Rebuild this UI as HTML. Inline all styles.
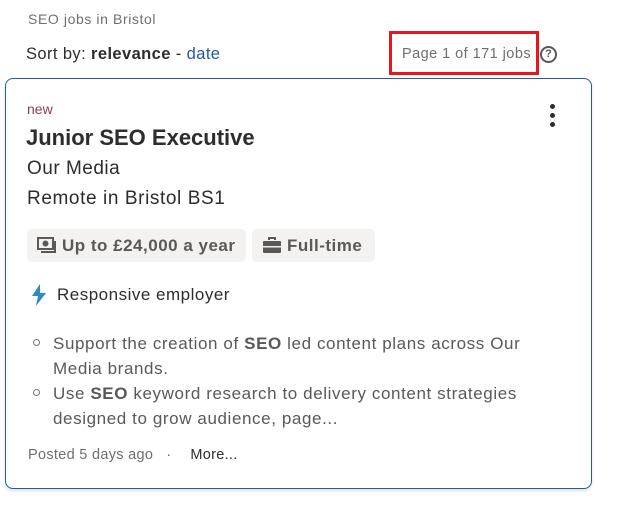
<!DOCTYPE html>
<html><head><meta charset="utf-8"><style>
body{margin:0;width:631px;height:516px;background:#fff;font-family:"Liberation Sans",sans-serif;position:relative;overflow:hidden;color:#2d2d2d}
.a{position:absolute;white-space:nowrap}
.card{position:absolute;left:5px;top:78px;width:585px;height:409px;border:1px solid #2557a7;border-radius:8px;box-shadow:0 2px 3px rgba(0,0,0,.12)}
.tag{position:absolute;top:229px;height:33px;background:#f3f2f1;border-radius:5px;font-weight:bold;font-size:17px;color:#595959;line-height:33px;letter-spacing:.5px}
.li{font-size:17px;color:#595959;letter-spacing:.6px}
.dot{position:absolute;width:5px;height:5px;border:1.3px solid #767676;border-radius:50%}
</style></head><body>
<div class="a" style="left:28px;top:11px;font-size:14px;color:#6f6f6f;letter-spacing:.6px">SEO jobs in Bristol</div>
<div class="a" style="left:26px;top:45px;font-size:16.5px;color:#2d2d2d;letter-spacing:.4px">Sort by: <b>relevance</b> - <span style="color:#2557a7">date</span></div>
<div class="a" style="left:389px;top:31px;width:144px;height:38px;border:3px solid #e8141e"></div>
<div class="a" style="left:402px;top:46px;font-size:14.5px;color:#6f6f6f;letter-spacing:.45px">Page 1 of 171 jobs</div>
<div class="a" style="left:540px;top:46px;width:13px;height:13px;border:2px solid #595959;border-radius:50%;font-size:11px;font-weight:bold;text-align:center;line-height:13px;color:#595959">?</div>
<div class="card"></div>
<div class="a" style="left:27px;top:101px;font-size:14px;color:#8e3a5a">new</div>
<div class="a" style="left:550px;top:104px;width:5px;height:5px;background:#2d2d2d;border-radius:50%"></div>
<div class="a" style="left:550px;top:113px;width:5px;height:5px;background:#2d2d2d;border-radius:50%"></div>
<div class="a" style="left:550px;top:122px;width:5px;height:5px;background:#2d2d2d;border-radius:50%"></div>
<div class="a" style="left:26px;top:125px;font-size:22px;font-weight:bold">Junior SEO Executive</div>
<div class="a" style="left:27px;top:158px;font-size:19px;letter-spacing:.5px">Our Media</div>
<div class="a" style="left:27px;top:188px;font-size:19px;letter-spacing:.6px">Remote in Bristol BS1</div>
<div class="tag" style="left:27px;width:219px"><svg style="position:absolute;left:10px;top:8px" width="20" height="18" viewBox="0 0 20 18"><rect x="1" y="1" width="15" height="11" fill="none" stroke="#595959" stroke-width="2"/><circle cx="8.5" cy="6.5" r="3" fill="#595959"/><path d="M18 4v11H4" fill="none" stroke="#595959" stroke-width="2"/></svg><span style="position:absolute;left:35px">Up to £24,000 a year</span></div>
<div class="tag" style="left:252px;width:123px"><svg style="position:absolute;left:11px;top:8px" width="18" height="17" viewBox="0 0 18 17"><path d="M6 3V1h6v2" fill="none" stroke="#595959" stroke-width="2"/><rect x="0" y="4" width="18" height="12" rx="1" fill="#595959"/><rect x="0" y="9" width="18" height="1.5" fill="#f3f2f1"/></svg><span style="position:absolute;left:35px">Full-time</span></div>
<svg class="a" style="left:31px;top:284px" width="16" height="22" viewBox="0 0 16 22"><path d="M9 0L1 12h6l-2 10 10-13H9z" fill="#2b8bc2"/></svg>
<div class="a" style="left:57px;top:285px;font-size:17px;letter-spacing:.5px">Responsive employer</div>
<div class="dot" style="left:33px;top:339px"></div>
<div class="dot" style="left:33px;top:389px"></div>
<div class="a li" style="left:53px;top:331px;line-height:25px">Support the creation of <b>SEO</b> led content plans across Our<br>Media brands.</div>
<div class="a li" style="left:53px;top:381px;line-height:25px">Use <b>SEO</b> keyword research to delivery content strategies<br>designed to grow audience, page...</div>
<div class="a" style="left:28px;top:447px;font-size:14.5px;color:#6f6f6f;letter-spacing:.3px">Posted 5 days ago &nbsp; · &nbsp; <span style="color:#2d2d2d;margin-left:6px">More...</span></div>
</body></html>
